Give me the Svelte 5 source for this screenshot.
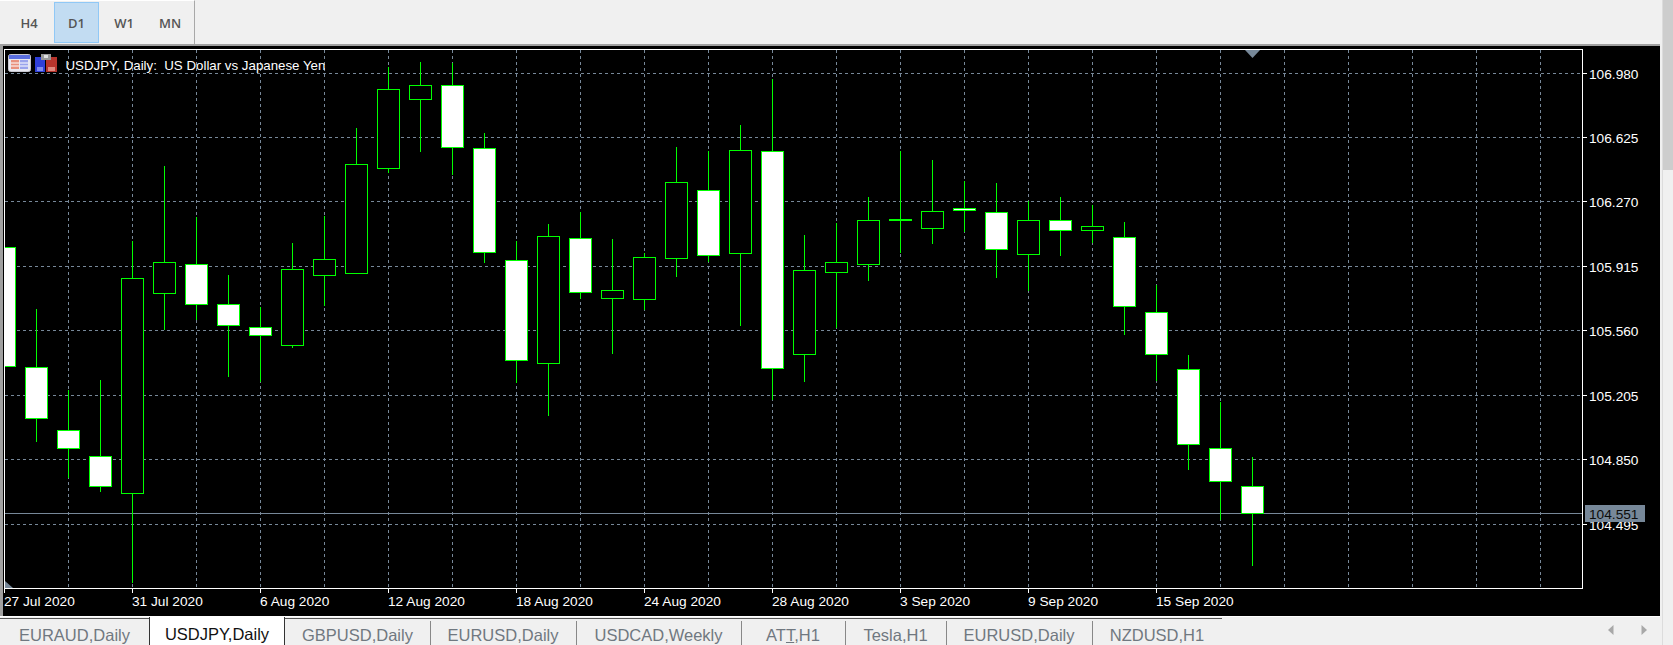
<script>
  // [centre x, wick top, body top, body bottom, wick bottom, white body]
  const candles = [
    [4, 247, 247, 366, 366, 1],
    [36, 309, 367, 418, 441, 1],
    [68, 390, 430, 448, 477, 1],
    [100, 380, 456, 486, 491, 1],
    [132, 241, 278, 493, 582, 0],
    [164, 166, 262, 293, 329, 0],
    [196, 217, 264, 304, 319, 1],
    [228, 275, 304, 325, 376, 1],
    [260, 307, 327, 335, 381, 1],
    [292, 243, 269, 345, 347, 0],
    [324, 216, 259, 275, 305, 0],
    [356, 128, 164, 273, 273, 0],
    [388, 67, 89, 168, 172, 0],
    [420, 62, 85, 99, 151, 0],
    [452, 63, 85, 147, 174, 1],
    [484, 133, 148, 252, 262, 1],
    [516, 241, 260, 360, 382, 1],
    [548, 224, 236, 363, 415, 0],
    [580, 212, 238, 292, 298, 1],
    [612, 239, 290, 298, 353, 0],
    [644, 253, 257, 299, 309, 0],
    [676, 147, 182, 258, 276, 0],
    [708, 151, 190, 255, 261, 1],
    [740, 125, 150, 253, 325, 0],
    [772, 79, 151, 368, 399, 1],
    [804, 235, 270, 354, 381, 0],
    [836, 223, 262, 272, 327, 0],
    [868, 197, 220, 264, 280, 0],
    [900, 151, 219, 220, 252, 0],
    [932, 160, 211, 228, 243, 0],
    [964, 181, 208, 210, 231, 1],
    [996, 183, 212, 249, 277, 1],
    [1028, 201, 220, 254, 290, 0],
    [1060, 197, 220, 230, 255, 1],
    [1092, 205, 226, 230, 242, 0],
    [1124, 222, 237, 306, 334, 1],
    [1156, 285, 312, 354, 380, 1],
    [1188, 355, 369, 444, 469, 1],
    [1220, 402, 448, 481, 519, 1],
    [1252, 457, 486, 513, 565, 1]
  ];

  const prices = [
    ['106.980', 73], ['106.625', 137], ['106.270', 201], ['105.915', 266],
    ['105.560', 330], ['105.205', 395], ['104.850', 459], ['104.495', 524]
  ];

  const dates = [
    ['27 Jul 2020', 4], ['31 Jul 2020', 132], ['6 Aug 2020', 260], ['12 Aug 2020', 388],
    ['18 Aug 2020', 516], ['24 Aug 2020', 644], ['28 Aug 2020', 772], ['3 Sep 2020', 900],
    ['9 Sep 2020', 1028], ['15 Sep 2020', 1156]
  ];

  const gridX = Array.from({ length: 24 }, (_, i) => 68 + i * 64);

  // tab widths follow the terminal's own sizing, the ATT tab is wider than its label
  const tabs = [
    ['EURAUD,Daily', 149], ['USDJPY,Daily', 136], ['GBPUSD,Daily', 145], ['EURUSD,Daily', 146],
    ['USDCAD,Weekly', 165], ['ATT,H1', 104], ['Tesla,H1', 101], ['EURUSD,Daily', 146], ['NZDUSD,H1', 130]
  ];
  const activeTab = 1;
</script>

<div class="page">
  <div class="main">
    <div class="toolbar">
      <div class="periods">
        <button class="period">H4</button>
        <button class="period active">D1</button>
        <button class="period">W1</button>
        <button class="period">MN</button>
      </div>
    </div>

    <div class="chart">
      <svg width="1657" height="570" viewBox="3 46 1657 570">
        <g class="grid">
          {#each gridX as x}
            <line x1={x + 0.5} x2={x + 0.5} y1="50" y2="588" />
          {/each}
          {#each prices as p}
            <line x1="5" x2="1582" y1={p[1] + 0.5} y2={p[1] + 0.5} />
          {/each}
        </g>

        <line class="bid" x1="5" x2="1582" y1="513.5" y2="513.5" />

        <svg x="5" y="50" width="1577" height="538" viewBox="5 50 1577 538">
          {#each candles as c}
            <line class="wick" x1={c[0] + 0.5} x2={c[0] + 0.5} y1={c[1]} y2={c[4] + 1} />
            <rect
              class="body"
              class:white={c[5]}
              x={c[0] - 10.5}
              y={c[2] + 0.5}
              width="22"
              height={c[3] - c[2]}
            />
          {/each}
        </svg>

        <rect class="frame" x="4.5" y="49.5" width="1578" height="539" />

        {#each prices as p}
          <line class="tick" x1="1583" x2="1587" y1={p[1] + 0.5} y2={p[1] + 0.5} />
          <text class="axis" x="1589" y={p[1] + 6}>{p[0]}</text>
        {/each}
        {#each dates as d}
          <line class="tick" x1={d[1] + 0.5} x2={d[1] + 0.5} y1="589" y2="593" />
          <text class="axis" x={d[1]} y="606">{d[0]}</text>
        {/each}

        <rect class="tag" x="1585" y="505" width="60" height="17" />
        <text class="axis dark" x="1589" y="519">104.551</text>

        <polygon class="mark" points="1245,50 1260,50 1252.5,58" />
        <polygon class="mark" points="5,581 13,588 5,588" />

        <!-- window list icon -->
        <rect x="8.5" y="54.5" width="22" height="17" rx="2" fill="#e8e8f0" stroke="#c8c8d0" />
        <rect x="9" y="55" width="21" height="4" fill="#5a6ee0" />
        <rect x="11" y="60" width="8" height="9" fill="#e8907c" />
        <rect x="20" y="60" width="8" height="9" fill="#9aa4ec" />
        <path d="M11 63h8M11 66h8M20 63h8M20 66h8" stroke="#fff" fill="none" />
        <!-- save icon -->
        <path d="M35 57h10v15H35z" fill="#2f3fd8" />
        <path d="M46 57h11v15H46z" fill="#b8342c" />
        <rect x="41" y="54" width="10" height="6" fill="#9a9a9a" />
        <rect x="44" y="55" width="4" height="3" fill="#e0e0e0" />
        <rect x="37" y="67" width="6" height="4" fill="#7f8cf0" />
        <rect x="48" y="67" width="7" height="4" fill="#e08a80" />

        <text class="axis title" x="65.5" y="70">USDJPY, Daily:&#160;&#160;US Dollar vs Japanese Yen</text>
      </svg>
    </div>

    <div class="tabs">
      {#each tabs as t, i}
        <div class="tab" class:current={i === activeTab} class:sep={i > activeTab + 1} style="width:{t[1]}px">
          {#if t[0] === 'ATT,H1'}AT<u>T</u>,H1{:else}{t[0]}{/if}
        </div>
      {/each}
      <div class="arrows">
        <svg width="6" height="10" viewBox="0 0 6 10"><path d="M5.5 0v10L0 5z" /></svg>
        <svg width="6" height="10" viewBox="0 0 6 10"><path d="M.5 0v10L6 5z" /></svg>
      </div>
    </div>
  </div>

  <div class="scrollbar"><div class="thumb"></div></div>
</div>

<style>
  :global(body) { margin: 0; background: #f0f0f0; }

  .page {
    display: flex;
    width: 1673px;
    height: 645px;
    overflow: hidden;
    background: #f0f0f0;
    font-family: "Liberation Sans", Arial, sans-serif;
  }
  .main { width: 1660px; display: flex; flex-direction: column; }

  .toolbar { height: 44px; flex: none; border-bottom: 2px solid #a0a0a0; box-sizing: content-box; }
  .periods {
    display: flex;
    width: 195px;
    height: 44px;
    box-sizing: border-box;
    padding: 1px 0 1px 6px;
    border-right: 1px solid #a8a8a8;
    border-top: 1px solid #fff;
  }
  .period {
    width: 46px;
    padding: 0;
    border: 1px solid transparent;
    background: none;
    color: #555;
    font: 600 13px "Open Sans", sans-serif;
  }
  .period.active { width: 45px; margin: 0 2px; background: #c2dcf2; border-color: #90c8f6; }

  .chart { flex: none; height: 570px; border-left: 3px solid #a0a0a0; background: #000; }
  .chart svg { display: block; }

  .grid line { stroke: #778899; stroke-dasharray: 3 3; }
  .bid { stroke: #778899; }
  .wick { stroke: #0f0; }
  .body { fill: #000; stroke: #0f0; }
  .body.white { fill: #fff; }
  .frame { fill: none; stroke: #fff; }
  .tick { stroke: #fff; }
  .tag, .mark { fill: #778899; }
  .axis { fill: #fff; font: 13.7px "Liberation Sans", Arial, sans-serif; }
  .axis.title { font-size: 13.3px; }
  .axis.dark { fill: #0c0c0c; }

  .tabs {
    flex: 1;
    display: flex;
    border-top: 1px solid #fff;
    overflow: hidden;
    font-size: 16.5px;
    color: #707880;
  }
  .tab {
    position: relative;
    flex: none;
    box-sizing: border-box;
    padding-top: 7px;
    margin-top: 1px;
    border-top: 1px solid #555;
    text-align: center;
    white-space: nowrap;
  }
  .tab.sep::before {
    content: "";
    position: absolute;
    left: 0;
    top: 2px;
    bottom: 0;
    width: 1px;
    background: #888;
  }
  .tab.current {
    margin-top: 0;
    padding-top: 8px;
    background: #fff;
    color: #111;
    border: solid #333;
    border-width: 0 1px;
  }
  .arrows { margin-left: auto; display: flex; gap: 27px; padding: 8px 13px 0 0; fill: #a8a8a8; }
  .arrows svg { display: block; }

  .scrollbar { flex: 1; margin-left: 2px; background: #f0f0f0; border-left: 1px solid #dcdcdc; }
  .thumb { height: 170px; background: #cdcdcd; }
</style>
